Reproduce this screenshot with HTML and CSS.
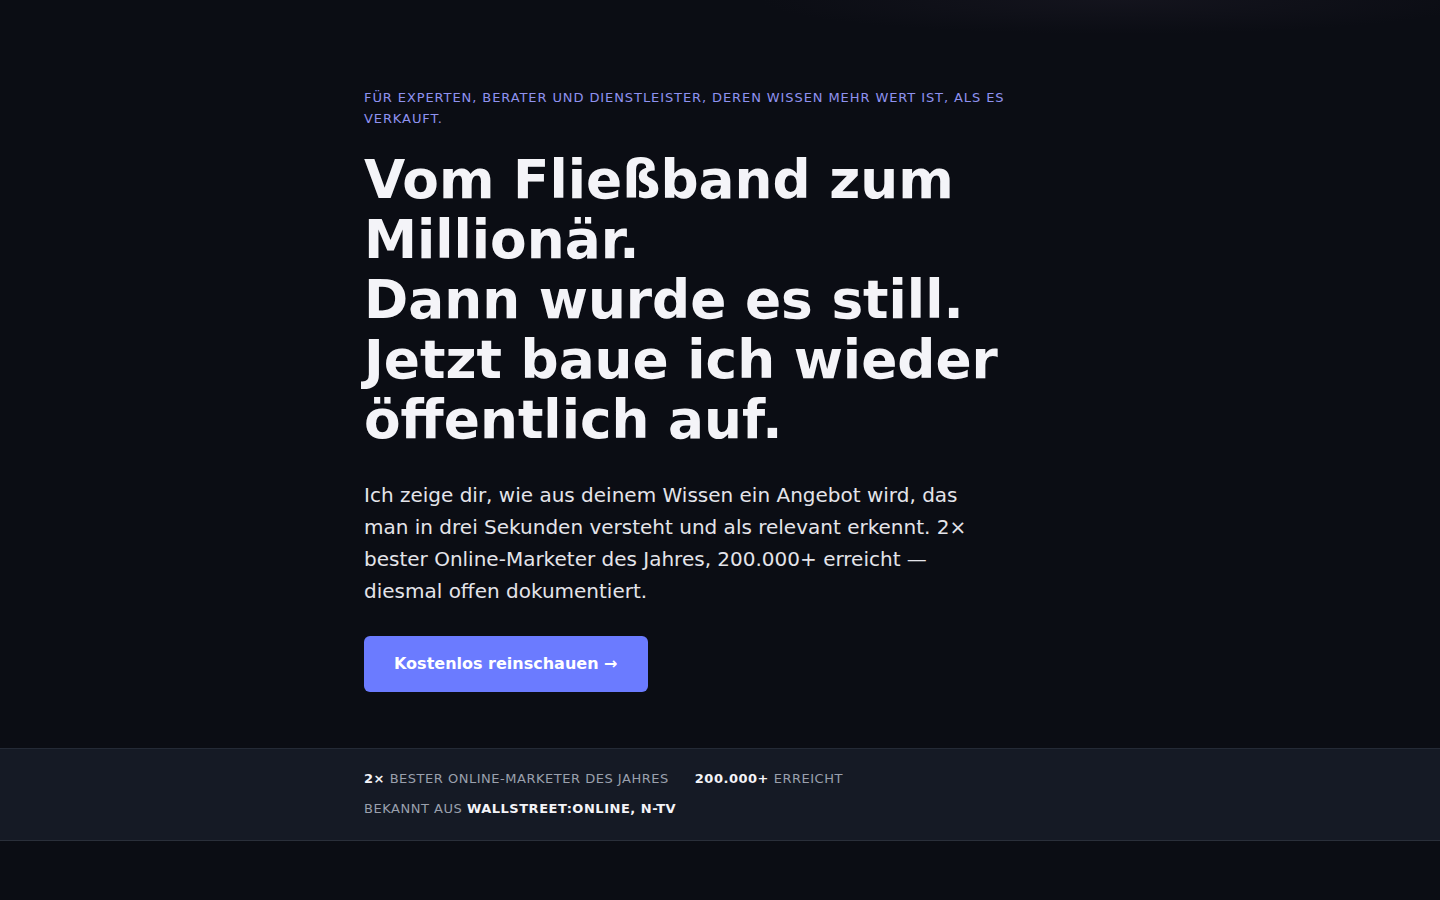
FILE: index.html
```html
<!DOCTYPE html>
<html lang="de">
<head>
<meta charset="utf-8">
<title>Vom Fließband zum Millionär</title>
<link rel="stylesheet" href="styles.css">
</head>
<body>
<main class="page">
  <section class="hero">
    <div class="container">
      <p class="eyebrow">Für Experten, Berater und Dienstleister, deren Wissen mehr wert ist, als es verkauft.</p>
      <h1 class="title">Vom Fließband zum Millionär.<br>Dann wurde es still.<br>Jetzt baue ich wieder öffentlich auf.</h1>
      <p class="lead">Ich zeige dir, wie aus deinem Wissen ein Angebot wird, das man in drei Sekunden versteht und als relevant erkennt. 2× bester Online-Marketer des Jahres, 200.000+ erreicht — diesmal offen dokumentiert.</p>
      <a class="cta" href="#">Kostenlos reinschauen →</a>
    </div>
  </section>
  <section class="proof">
    <div class="container">
      <div class="proof-row">
        <span class="proof-item"><strong>2×</strong> Bester Online-Marketer des Jahres</span>
        <span class="proof-item"><strong>200.000+</strong> erreicht</span>
      </div>
      <div class="proof-row">
        <span class="proof-item">Bekannt aus <strong>wallstreet:online, n-tv</strong></span>
      </div>
    </div>
  </section>
</main>
</body>
</html>
```
FILE: styles.css
```css
* { box-sizing: border-box; }
html, body { margin: 0; padding: 0; }
body {
  background: #0b0d14;
  color: #f2f2f7;
  font-family: "DejaVu Sans", "Noto Sans", sans-serif;
  min-height: 900px;
}
.page {
  min-height: 900px;
  background: radial-gradient(ellipse 360px 34px at 1120px 0, rgba(30, 28, 40, 0.45), transparent 100%), #0b0d14;
}
.container {
  width: 712px;
  margin: 0 auto;
}
.hero {
  padding: 87px 0 56px;
}
.eyebrow {
  margin: 0;
  font-size: 13px;
  line-height: 21px;
  letter-spacing: 0.07em;
  text-transform: uppercase;
  color: #8f92f0;
  max-width: 660px;
}
.title {
  margin: 21px 0 0;
  font-size: 53.3px;
  line-height: 60px;
  font-weight: 700;
  color: #f4f4f8;
  max-width: 660px;
  letter-spacing: 0;
}
.lead {
  margin: 29px 0 0;
  font-size: 20px;
  line-height: 32px;
  color: #e4e4ea;
  max-width: 620px;
}
.cta {
  display: inline-block;
  margin-top: 29px;
  padding: 0 30px;
  height: 56px;
  line-height: 56px;
  background: #6b7bff;
  color: #ffffff;
  font-size: 16px;
  font-weight: 700;
  text-decoration: none;
  border-radius: 6px;
}
.proof {
  background: #151a25;
  border-top: 1px solid #242a36;
  border-bottom: 1px solid #2a2f3a;
  padding: 20px 0 21px;
}
.proof-row {
  display: flex;
  gap: 26px;
  font-size: 13px;
  line-height: 20px;
  letter-spacing: 0.04em;
  text-transform: uppercase;
  color: #9aa0ad;
}
.proof-row + .proof-row { margin-top: 10px; }
.proof-item strong {
  color: #f4f4f8;
  font-weight: 700;
}
```
